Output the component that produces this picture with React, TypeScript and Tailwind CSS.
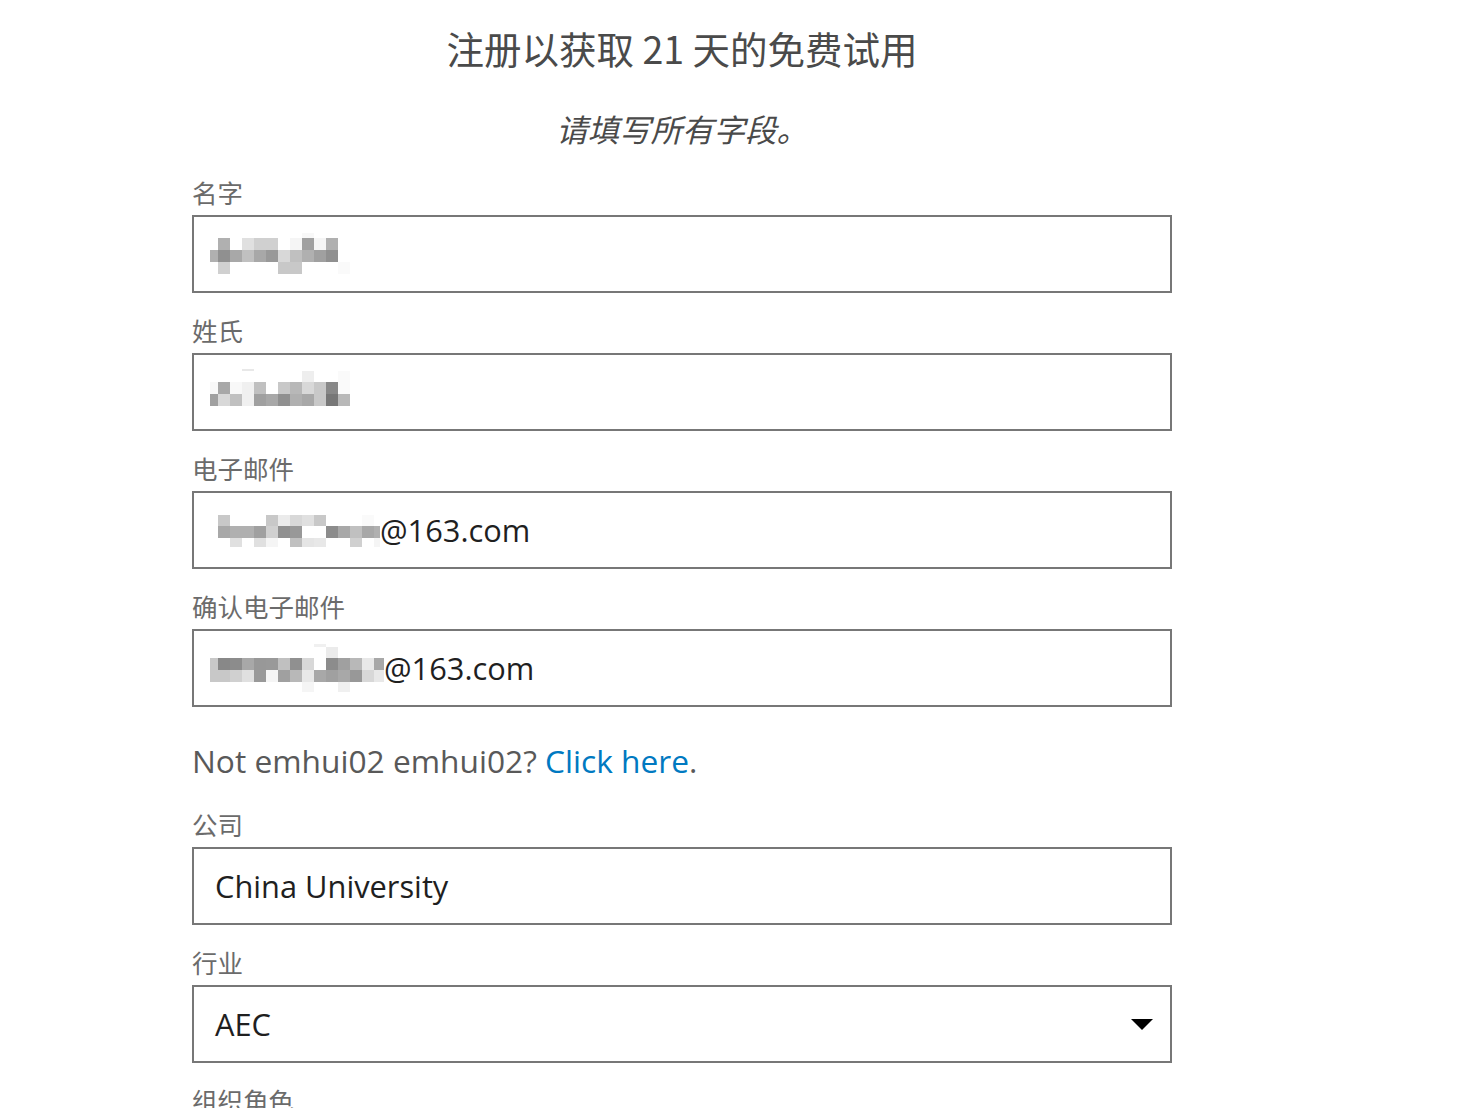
import React from "react";

type Row = { y: number; h: number; cells: string };

// token 0 = narrow column (8px), token k = 12px column k-1
function Mosaic({ rows, width }: { rows: Row[]; width: number }) {
  return (
    <svg width={width} height={48} viewBox={`0 0 ${width} 48`} className="shrink-0 -ml-[5px]">
      {rows.map((r, ri) =>
        r.cells.split(" ").map((c, i) => {
          if (c === "..") return null;
          const x = i === 0 ? 0 : 8 + (i - 1) * 12;
          const w = i === 0 ? 8 : 12;
          const hex = c.length === 2 ? `#${c}${c}${c}` : `#${c}`;
          return <rect key={`${ri}-${i}`} x={x} y={r.y} width={w} height={r.h} fill={hex} />;
        })
      )}
    </svg>
  );
}

const firstName: Row[] = [
  { y: 3, h: 5, cells: ".. .. .. .. .. .. .. .. f8" },
  { y: 8, h: 12, cells: ".. b0 .. e0 d0 d0 .. f5 a0 f5 b0" },
  { y: 20, h: 12, cells: "b0 90 a8 c0 a8 99 d8 c0 b0 a0 90" },
  { y: 32, h: 12, cells: ".. d0 .. .. .. .. c8 c8 .. .. .. fa" },
];

const lastName: Row[] = [
  { y: 1, h: 2, cells: ".. .. .. e8" },
  { y: 3, h: 11, cells: ".. .. .. .. .. .. .. .. ee .. .. fa" },
  { y: 14, h: 12, cells: "f8 a8 f8 f0 c0 .. c8 b8 d8 c8 88 fa" },
  { y: 26, h: 12, cells: "a0 d8 c0 f0 a0 a8 90 b0 a8 c8 77 b8" },
];

const email: Row[] = [
  { y: 9, h: 11, cells: ".. c8 .. .. .. c8 eb d8 e0 c8 .. .. .. fa" },
  { y: 20, h: 12, cells: ".. a8 b0 b0 a0 d0 90 98 .. .. 8c a8 c0 a8 b0" },
  { y: 32, h: 9, cells: ".. .. e0 .. e0 f5 .. c0 e5 e8 .. .. d0 .. f5" },
];

const confirmEmail: Row[] = [
  { y: 0, h: 3, cells: ".. .. .. .. .. .. .. .. .. f0" },
  { y: 3, h: 11, cells: ".. .. .. .. .. .. .. .. .. .. eb" },
  { y: 14, h: 12, cells: "c8 88 8c a8 98 99 c0 90 d8 .. 8c a0 b8 e8 a8" },
  { y: 26, h: 12, cells: "c8 c8 d0 e0 99 f5 a0 b8 e8 a8 a0 a8 98 d8 e8" },
  { y: 38, h: 10, cells: ".. .. .. .. .. .. .. .. f5 .. .. f0" },
];

function Label({ children }: { children: React.ReactNode }) {
  return (
    <div className="h-[28px] leading-[28px] mb-[9px] text-[25.5px] text-[#6b6b6b] font-['Noto_Sans_CJK_SC',sans-serif]">
      {children}
    </div>
  );
}

function Box({ children }: { children?: React.ReactNode }) {
  return (
    <div className="h-[78px] border-2 border-[#777777] bg-white flex items-center pl-[21px] pr-4 mb-[23px] text-[30.8px] text-[#1f1f1f] font-['Open_Sans','Noto_Sans_CJK_SC',sans-serif]">
      {children}
    </div>
  );
}

export default function App() {
  return (
    <div className="min-h-screen bg-white">
      <div className="w-[980px] ml-[192px]">
        <h1 className="pt-[26px] h-[70px] leading-[44px] text-center text-[37.5px] text-[#4a4a4a] font-['Noto_Sans_CJK_SC',sans-serif]">
          注册以获取 21 天的免费试用
        </h1>
        <p className="mt-[38px] leading-[40px] text-center italic text-[31.5px] text-[#4a4a4a] font-['Noto_Sans_CJK_SC',sans-serif]">
          请填写所有字段。
        </p>

        <div className="mt-[30px]">
          <Label>名字</Label>
          <Box>
            <Mosaic rows={firstName} width={150} />
          </Box>

          <Label>姓氏</Label>
          <Box>
            <Mosaic rows={lastName} width={150} />
          </Box>

          <Label>电子邮件</Label>
          <Box>
            <Mosaic rows={email} width={170} />
            <span>@163.com</span>
          </Box>

          <Label>确认电子邮件</Label>
          <Box>
            <Mosaic rows={confirmEmail} width={174} />
            <span>@163.com</span>
          </Box>

          <p className="mt-[31px] leading-[46px] text-[31.7px] text-[#595959] font-['Open_Sans',sans-serif]">
            Not emhui02 emhui02? <a className="text-[#0079c1]">Click here</a>.
          </p>

          <div className="mt-[26px]">
            <Label>公司</Label>
            <Box>
              <span>China University</span>
            </Box>
          </div>

          <Label>行业</Label>
          <Box>
            <span className="flex-1">AEC</span>
            <svg width="22" height="11" viewBox="0 0 22 11" className="mr-[1px]">
              <path d="M0 0 H22 L11 11 Z" fill="#000" />
            </svg>
          </Box>

          <Label>组织角色</Label>
        </div>
      </div>
    </div>
  );
}
